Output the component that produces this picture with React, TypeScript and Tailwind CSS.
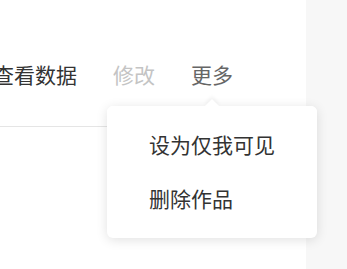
import React from "react";

export default function App() {
  const font = { fontFamily: '"Microsoft YaHei", "Noto Sans CJK SC", "Noto Sans", sans-serif' };
  return (
    <div className="relative flex w-[347px] h-[269px] overflow-hidden bg-[#f7f7f7]" style={font}>
      <div className="w-[306px] h-full bg-white flex flex-col overflow-hidden">
        <div className="h-[127px] flex items-start border-b border-[#e5e5e5] pt-[64px]">
          <div className="flex items-center gap-[36px] -ml-[7px] text-[21px] leading-none whitespace-nowrap">
            <span className="text-[#333]">查看数据</span>
            <span className="text-[#c4c4c4]">修改</span>
            <span className="text-[#666]">更多</span>
          </div>
        </div>
      </div>
      <div className="absolute left-[107px] top-[106px] w-[210px] h-[132px] bg-white rounded-[6px] shadow-[0_2px_12px_rgba(0,0,0,0.12)]">
        <div className="absolute left-[100px] -top-[5px] w-[10px] h-[10px] bg-white rotate-45 shadow-[-2px_-2px_4px_rgba(0,0,0,0.05)]" />
        <div className="relative flex flex-col pl-[42px] pt-[28px] gap-[33px] text-[21px] leading-none text-[#333] bg-white rounded-[6px]">
          <span>设为仅我可见</span>
          <span>删除作品</span>
        </div>
      </div>
    </div>
  );
}
